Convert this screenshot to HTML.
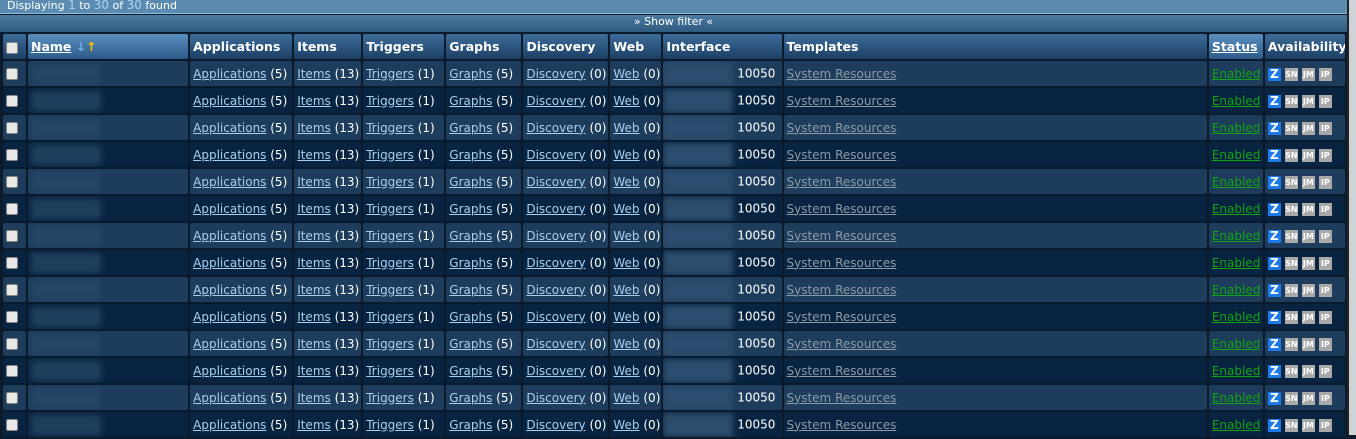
<!DOCTYPE html>
<html><head><meta charset="utf-8"><style>
body{margin:0;width:1356px;height:435px;overflow:hidden;background:#0c1b2b;font-family:"DejaVu Sans",Verdana,sans-serif;font-size:12px;color:#fff;position:relative}
.top{position:absolute;left:0;top:0;width:1347px;height:14px;background:#5b8bb0;border-bottom:1px solid #8fbde0;font-size:11px;color:#fff;line-height:10px;padding-left:7px;box-sizing:border-box}
.top b{color:#a8d2f0;font-weight:normal;font-size:12px}
.flt{position:absolute;left:0;top:15px;width:1347px;height:17px;background:linear-gradient(#4d7ba0,#2e5a80);text-align:center;font-size:11px;line-height:14px}
.sb{position:absolute;left:1347px;top:0;width:9px;height:435px;background:#cfd3d6;border-left:2px solid #222}
table{position:absolute;left:1px;top:32px;border-collapse:separate;border-spacing:2px;table-layout:fixed;width:1346px}
td,th{height:25px;padding:0 0 0 3px;border-radius:2px;white-space:nowrap;overflow:hidden;text-align:left}
th{background:linear-gradient(#3d6d9a,#1c3f64);font-weight:bold;font-size:12.5px}
th.s{background:linear-gradient(#5a90c0,#2b5a88)}
th u{text-decoration:underline}
tr.o td{background:#1e3c5c}
tr.e td{background:#082441}
a{color:#a9cff0;text-decoration:underline}
a.t{color:#8e9aa5}
a.g{color:#12a312}
.cb{display:inline-block;width:10px;height:10px;background:#e8e8e8;border:1px solid #888;border-radius:2px;vertical-align:middle}
.bl{display:inline-block;width:70px;height:20px;background:#2a4a6a;opacity:.7;filter:blur(3px);vertical-align:middle}
.ib{display:inline-block;width:70px;height:24px;background:#2c4d6d;filter:blur(3px);vertical-align:middle;margin-left:-3px}
.i{display:inline-block;width:13px;height:13px;margin-right:4px;vertical-align:middle;font-size:8px;line-height:13px;text-align:center;font-weight:bold;color:#fff;background:#a9a9a9}
.z{background:#1b7ae8;font-size:12px}
</style></head><body>
<div class="top">Displaying <b>1</b> to <b>30</b> of <b>30</b> found</div>
<div class="flt">» Show filter «</div>
<div class="sb"></div>
<table>
<colgroup><col style="width:23px"><col style="width:160px"><col style="width:102px"><col style="width:67px"><col style="width:81px"><col style="width:75px"><col style="width:85px"><col style="width:51px"><col style="width:118px"><col style="width:423px"><col style="width:54px"><col style="width:80px"></colgroup>
<tr><th><span class="cb"></span></th><th class="s"><u>Name</u> <span style="color:#6ab0e8">↓</span><span style="color:#ffc000">↑</span></th><th>Applications</th><th>Items</th><th>Triggers</th><th>Graphs</th><th>Discovery</th><th>Web</th><th>Interface</th><th>Templates</th><th class="s"><u>Status</u></th><th>Availability</th></tr>
<tr class="o"><td><span class="cb"></span></td><td><span class="bl"></span></td><td><a>Applications</a> (5)</td><td><a>Items</a> (13)</td><td><a>Triggers</a> (1)</td><td><a>Graphs</a> (5)</td><td><a>Discovery</a> (0)</td><td><a>Web</a> (0)</td><td><span class="ib"></span> 10050</td><td><a class="t">System Resources</a></td><td><a class="g">Enabled</a></td><td><span class="i z">Z</span><span class="i">SN</span><span class="i">JM</span><span class="i">IP</span></td></tr>
<tr class="e"><td><span class="cb"></span></td><td><span class="bl"></span></td><td><a>Applications</a> (5)</td><td><a>Items</a> (13)</td><td><a>Triggers</a> (1)</td><td><a>Graphs</a> (5)</td><td><a>Discovery</a> (0)</td><td><a>Web</a> (0)</td><td><span class="ib"></span> 10050</td><td><a class="t">System Resources</a></td><td><a class="g">Enabled</a></td><td><span class="i z">Z</span><span class="i">SN</span><span class="i">JM</span><span class="i">IP</span></td></tr>
<tr class="o"><td><span class="cb"></span></td><td><span class="bl"></span></td><td><a>Applications</a> (5)</td><td><a>Items</a> (13)</td><td><a>Triggers</a> (1)</td><td><a>Graphs</a> (5)</td><td><a>Discovery</a> (0)</td><td><a>Web</a> (0)</td><td><span class="ib"></span> 10050</td><td><a class="t">System Resources</a></td><td><a class="g">Enabled</a></td><td><span class="i z">Z</span><span class="i">SN</span><span class="i">JM</span><span class="i">IP</span></td></tr>
<tr class="e"><td><span class="cb"></span></td><td><span class="bl"></span></td><td><a>Applications</a> (5)</td><td><a>Items</a> (13)</td><td><a>Triggers</a> (1)</td><td><a>Graphs</a> (5)</td><td><a>Discovery</a> (0)</td><td><a>Web</a> (0)</td><td><span class="ib"></span> 10050</td><td><a class="t">System Resources</a></td><td><a class="g">Enabled</a></td><td><span class="i z">Z</span><span class="i">SN</span><span class="i">JM</span><span class="i">IP</span></td></tr>
<tr class="o"><td><span class="cb"></span></td><td><span class="bl"></span></td><td><a>Applications</a> (5)</td><td><a>Items</a> (13)</td><td><a>Triggers</a> (1)</td><td><a>Graphs</a> (5)</td><td><a>Discovery</a> (0)</td><td><a>Web</a> (0)</td><td><span class="ib"></span> 10050</td><td><a class="t">System Resources</a></td><td><a class="g">Enabled</a></td><td><span class="i z">Z</span><span class="i">SN</span><span class="i">JM</span><span class="i">IP</span></td></tr>
<tr class="e"><td><span class="cb"></span></td><td><span class="bl"></span></td><td><a>Applications</a> (5)</td><td><a>Items</a> (13)</td><td><a>Triggers</a> (1)</td><td><a>Graphs</a> (5)</td><td><a>Discovery</a> (0)</td><td><a>Web</a> (0)</td><td><span class="ib"></span> 10050</td><td><a class="t">System Resources</a></td><td><a class="g">Enabled</a></td><td><span class="i z">Z</span><span class="i">SN</span><span class="i">JM</span><span class="i">IP</span></td></tr>
<tr class="o"><td><span class="cb"></span></td><td><span class="bl"></span></td><td><a>Applications</a> (5)</td><td><a>Items</a> (13)</td><td><a>Triggers</a> (1)</td><td><a>Graphs</a> (5)</td><td><a>Discovery</a> (0)</td><td><a>Web</a> (0)</td><td><span class="ib"></span> 10050</td><td><a class="t">System Resources</a></td><td><a class="g">Enabled</a></td><td><span class="i z">Z</span><span class="i">SN</span><span class="i">JM</span><span class="i">IP</span></td></tr>
<tr class="e"><td><span class="cb"></span></td><td><span class="bl"></span></td><td><a>Applications</a> (5)</td><td><a>Items</a> (13)</td><td><a>Triggers</a> (1)</td><td><a>Graphs</a> (5)</td><td><a>Discovery</a> (0)</td><td><a>Web</a> (0)</td><td><span class="ib"></span> 10050</td><td><a class="t">System Resources</a></td><td><a class="g">Enabled</a></td><td><span class="i z">Z</span><span class="i">SN</span><span class="i">JM</span><span class="i">IP</span></td></tr>
<tr class="o"><td><span class="cb"></span></td><td><span class="bl"></span></td><td><a>Applications</a> (5)</td><td><a>Items</a> (13)</td><td><a>Triggers</a> (1)</td><td><a>Graphs</a> (5)</td><td><a>Discovery</a> (0)</td><td><a>Web</a> (0)</td><td><span class="ib"></span> 10050</td><td><a class="t">System Resources</a></td><td><a class="g">Enabled</a></td><td><span class="i z">Z</span><span class="i">SN</span><span class="i">JM</span><span class="i">IP</span></td></tr>
<tr class="e"><td><span class="cb"></span></td><td><span class="bl"></span></td><td><a>Applications</a> (5)</td><td><a>Items</a> (13)</td><td><a>Triggers</a> (1)</td><td><a>Graphs</a> (5)</td><td><a>Discovery</a> (0)</td><td><a>Web</a> (0)</td><td><span class="ib"></span> 10050</td><td><a class="t">System Resources</a></td><td><a class="g">Enabled</a></td><td><span class="i z">Z</span><span class="i">SN</span><span class="i">JM</span><span class="i">IP</span></td></tr>
<tr class="o"><td><span class="cb"></span></td><td><span class="bl"></span></td><td><a>Applications</a> (5)</td><td><a>Items</a> (13)</td><td><a>Triggers</a> (1)</td><td><a>Graphs</a> (5)</td><td><a>Discovery</a> (0)</td><td><a>Web</a> (0)</td><td><span class="ib"></span> 10050</td><td><a class="t">System Resources</a></td><td><a class="g">Enabled</a></td><td><span class="i z">Z</span><span class="i">SN</span><span class="i">JM</span><span class="i">IP</span></td></tr>
<tr class="e"><td><span class="cb"></span></td><td><span class="bl"></span></td><td><a>Applications</a> (5)</td><td><a>Items</a> (13)</td><td><a>Triggers</a> (1)</td><td><a>Graphs</a> (5)</td><td><a>Discovery</a> (0)</td><td><a>Web</a> (0)</td><td><span class="ib"></span> 10050</td><td><a class="t">System Resources</a></td><td><a class="g">Enabled</a></td><td><span class="i z">Z</span><span class="i">SN</span><span class="i">JM</span><span class="i">IP</span></td></tr>
<tr class="o"><td><span class="cb"></span></td><td><span class="bl"></span></td><td><a>Applications</a> (5)</td><td><a>Items</a> (13)</td><td><a>Triggers</a> (1)</td><td><a>Graphs</a> (5)</td><td><a>Discovery</a> (0)</td><td><a>Web</a> (0)</td><td><span class="ib"></span> 10050</td><td><a class="t">System Resources</a></td><td><a class="g">Enabled</a></td><td><span class="i z">Z</span><span class="i">SN</span><span class="i">JM</span><span class="i">IP</span></td></tr>
<tr class="e"><td><span class="cb"></span></td><td><span class="bl"></span></td><td><a>Applications</a> (5)</td><td><a>Items</a> (13)</td><td><a>Triggers</a> (1)</td><td><a>Graphs</a> (5)</td><td><a>Discovery</a> (0)</td><td><a>Web</a> (0)</td><td><span class="ib"></span> 10050</td><td><a class="t">System Resources</a></td><td><a class="g">Enabled</a></td><td><span class="i z">Z</span><span class="i">SN</span><span class="i">JM</span><span class="i">IP</span></td></tr>
</table>
</body></html>
